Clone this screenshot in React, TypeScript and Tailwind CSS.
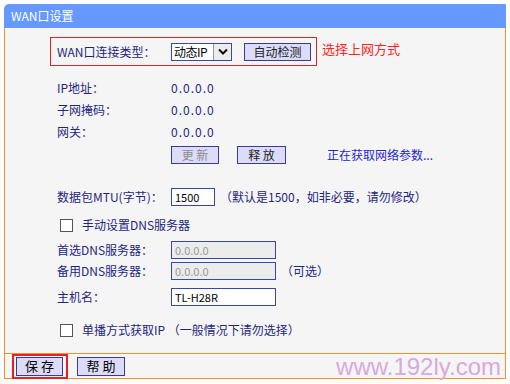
import type { ReactNode } from 'react'

const font = { fontFamily: '"Noto Sans CJK SC", "Liberation Sans", sans-serif' }

function Label({ children }: { children: ReactNode }) {
  return <div className="w-[114px] shrink-0">{children}</div>
}

function Checkbox() {
  return <div className="w-[13px] h-[13px] bg-white border border-[#555] shrink-0" />
}

function Field({ value, disabled = false, w = 'w-[105px]' }: { value: string; disabled?: boolean; w?: string }) {
  return (
    <div
      className={`${w} h-[18px] flex items-center px-[3px] border border-[#3848a8] text-[11px] ${
        disabled ? 'bg-[#ececec] text-[#9a9a9a]' : 'bg-white text-black'
      }`}
    >
      {value}
    </div>
  )
}

function Btn({ children, disabled = false, w }: { children: ReactNode; disabled?: boolean; w: string }) {
  return (
    <div
      className={`${w} h-[18px] flex items-center justify-center bg-[#dcdcf8] border border-[#3a3a9c] text-[12px] leading-none ${
        disabled ? 'text-[#8a8a8a]' : 'text-[#222]'
      }`}
    >
      {children}
    </div>
  )
}

export default function App() {
  return (
    <div className="w-[510px] h-[384px] bg-white pt-[4px] pl-[4px]" style={font}>
      <div className="w-[502px] flex flex-col">
        {/* title bar */}
        <div className="h-[24px] bg-[#6699ff] rounded-tl-[5px] rounded-tr-[1px] flex items-center pl-[7px] text-white text-[12px]">
          WAN口设置
        </div>

        {/* body */}
        <div className="h-[325px] bg-[#f5f5f5] border-x border-[#f7902a] text-[12px] text-[#1e2580] pt-[9px]">
          <div className="flex items-start ml-[45px]">
            <div className="w-[267px] h-[29px] border border-[#e82020] flex items-center pl-[6px]">
              <Label>WAN口连接类型：</Label>
              <div className="w-[61px] h-[18px] bg-white border border-[#3848a8] flex items-center">
                <span className="flex-1 pl-[2px] text-[12px] text-black leading-none tracking-[-0.5px]">动态IP</span>
                <div className="w-[18px] h-[16px] bg-[#ececec] border-l border-[#9a9a9a] flex items-center justify-center">
                  <svg width="10" height="7" viewBox="0 0 10 7">
                    <path d="M1 1.5 L5 5.5 L9 1.5" fill="none" stroke="#111" strokeWidth="2" />
                  </svg>
                </div>
              </div>
              <div className="ml-[12px]">
                <Btn w="w-[67px]">自动检测</Btn>
              </div>
            </div>
            <div className="ml-[5px] mt-[2px] text-[13px] text-[#ff2424]">选择上网方式</div>
          </div>

          <div className="pl-[52px]">
            <div className="h-[22px] mt-[11px] flex items-center">
              <Label>IP地址：</Label>
              <span className="tracking-[1px]">0.0.0.0</span>
            </div>
            <div className="h-[22px] flex items-center">
              <Label>子网掩码：</Label>
              <span className="tracking-[1px]">0.0.0.0</span>
            </div>
            <div className="h-[22px] flex items-center">
              <Label>网关：</Label>
              <span className="tracking-[1px]">0.0.0.0</span>
            </div>
            <div className="h-[18px] mt-[3px] flex items-center">
              <div className="w-[114px] shrink-0" />
              <Btn w="w-[48px]" disabled>
                更&nbsp;新
              </Btn>
              <div className="ml-[18px]">
                <Btn w="w-[49px]">释&nbsp;放</Btn>
              </div>
              <span className="ml-[41px] text-[#2424d0]">正在获取网络参数...</span>
            </div>

            <div className="h-[18px] mt-[24px] flex items-center">
              <Label>数据包MTU(字节)：</Label>
              <Field value="1500" w="w-[44px]" />
              <span className="ml-[5px]">（默认是1500，如非必要，请勿修改）</span>
            </div>

            <div className="h-[22px] mt-[8px] flex items-center pl-[3px]">
              <Checkbox />
              <span className="ml-[9px]">手动设置DNS服务器</span>
            </div>
            <div className="h-[18px] mt-[5px] flex items-center">
              <Label>首选DNS服务器：</Label>
              <Field value="0.0.0.0" disabled />
            </div>
            <div className="h-[18px] mt-[3px] flex items-center">
              <Label>备用DNS服务器：</Label>
              <Field value="0.0.0.0" disabled />
              <span className="ml-[5px]">（可选）</span>
            </div>
            <div className="h-[18px] mt-[8px] flex items-center">
              <Label>主机名：</Label>
              <Field value="TL-H28R" />
            </div>

            <div className="h-[22px] mt-[13px] flex items-center pl-[3px]">
              <Checkbox />
              <span className="ml-[9px]">单播方式获取IP （一般情况下请勿选择）</span>
            </div>
          </div>
        </div>

        {/* footer */}
        <div className="relative h-[26px] bg-[#f5f5f5] border border-[#f7902a] flex items-center">
          <div className="ml-[7px] w-[56px] h-[25px] border-2 border-[#e82020] flex items-center pl-[2px]">
            <div className="w-[47px] h-[19px] bg-[#dcdcf8] border border-[#3a3a9c] flex items-center justify-center text-[13px] text-black">
              保&nbsp;存
            </div>
          </div>
          <div className="ml-[9px] w-[48px] h-[19px] bg-[#dcdcf8] border border-[#3a3a9c] flex items-center justify-center text-[13px] text-black">
            帮&nbsp;助
          </div>
          <div
            className="absolute right-[4px] top-[1px] text-[24px] leading-none text-[#d9a9db]"
            style={{ fontFamily: '"Liberation Sans", Arial, sans-serif' }}
          >
            www.192ly.com
          </div>
        </div>
      </div>
    </div>
  )
}
